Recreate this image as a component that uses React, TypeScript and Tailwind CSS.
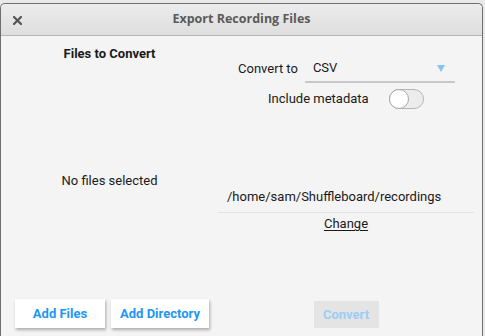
import { useState } from "react";

export default function App() {
  const [metadata, setMetadata] = useState(false);

  return (
    <div className="w-[485px] h-[336px] overflow-hidden bg-[#e9e9e9] pt-[3px] pr-[2px] font-['Roboto',sans-serif]">
      <div className="flex h-[333px] w-[483px] flex-col rounded-t-[5px] border-l border-r border-t border-[#6f6f6f] bg-[#f4f4f4]">
        <div className="relative flex h-[32px] shrink-0 items-center justify-center rounded-t-[5px] border-b border-[#b8b8b8] bg-gradient-to-b from-[#ececec] to-[#dedede]">
          <svg
            width="9"
            height="9"
            viewBox="0 0 9 9"
            className="absolute left-[12px] top-[12px]"
          >
            <path
              d="M1 1 L8 8 M8 1 L1 8"
              stroke="#555"
              strokeWidth="2.2"
              strokeLinecap="square"
            />
          </svg>
          <span className="font-['Open_Sans',sans-serif] text-[12.5px] font-bold text-[#5a5a5a]">
            Export Recording Files
          </span>
        </div>

        <div className="flex flex-1 text-[13px] text-[#1a1a1a]">
          <div className="flex w-[217px] flex-col">
            <div className="mt-[10px] text-center font-bold leading-[16px]">
              Files to Convert
            </div>
            <div className="mt-[111px] text-center leading-[16px]">
              No files selected
            </div>
            <div className="mt-auto mb-[8px] flex gap-[6px] pl-[14px]">
              <button
                type="button"
                className="h-[29px] w-[90px] bg-white font-bold text-[#2196f3] shadow-[1px_2px_3px_rgba(0,0,0,0.3)]"
              >
                Add Files
              </button>
              <button
                type="button"
                className="h-[29px] w-[98px] bg-white font-bold text-[#2196f3] shadow-[1px_2px_3px_rgba(0,0,0,0.3)]"
              >
                Add Directory
              </button>
            </div>
          </div>

          <div className="flex flex-1 flex-col pr-[8px]">
            <div className="mt-[23px] flex items-end">
              <span className="ml-[20px] mr-[7px] pb-[6px] leading-[16px]">
                Convert to
              </span>
              <div className="flex h-[24px] w-[150px] items-start justify-between border-b-2 border-[#c8c8c8] pl-[8px] pr-[10px] pt-[1px]">
                <span className="leading-[16px]">CSV</span>
                <svg width="8" height="7" viewBox="0 0 8 7" className="mt-[5px]">
                  <path d="M0 0 H8 L4 7 Z" fill="#85c4f2" />
                </svg>
              </div>
            </div>
            <div className="mt-[6px] flex items-center">
              <span className="ml-[50px] leading-[16px]">Include metadata</span>
              <button
                type="button"
                onClick={() => setMetadata(!metadata)}
                className={`ml-[20px] flex h-[20px] w-[35px] items-center rounded-full border border-[#b5b5b5] ${
                  metadata ? "justify-end bg-[#90caf9]" : "justify-start bg-[#ececec]"
                }`}
              >
                <span className="-ml-px h-[20px] w-[20px] rounded-full border border-[#a8a8a8] bg-white" />
              </button>
            </div>
            <div className="mt-[80px] pl-[9px] leading-[16px]">
              /home/sam/Shuffleboard/recordings
            </div>
            <div className="mt-[7px] border-t border-[#e2e2e2]" />
            <div className="mt-[3px] text-center leading-[16px] underline underline-offset-2">
              Change
            </div>
            <div className="mt-auto mb-[8px] flex justify-center">
              <button
                type="button"
                disabled
                className="h-[27px] w-[65px] bg-[#e4e4e4] font-bold text-[#9ccdf5]"
              >
                Convert
              </button>
            </div>
          </div>
        </div>
      </div>
    </div>
  );
}
